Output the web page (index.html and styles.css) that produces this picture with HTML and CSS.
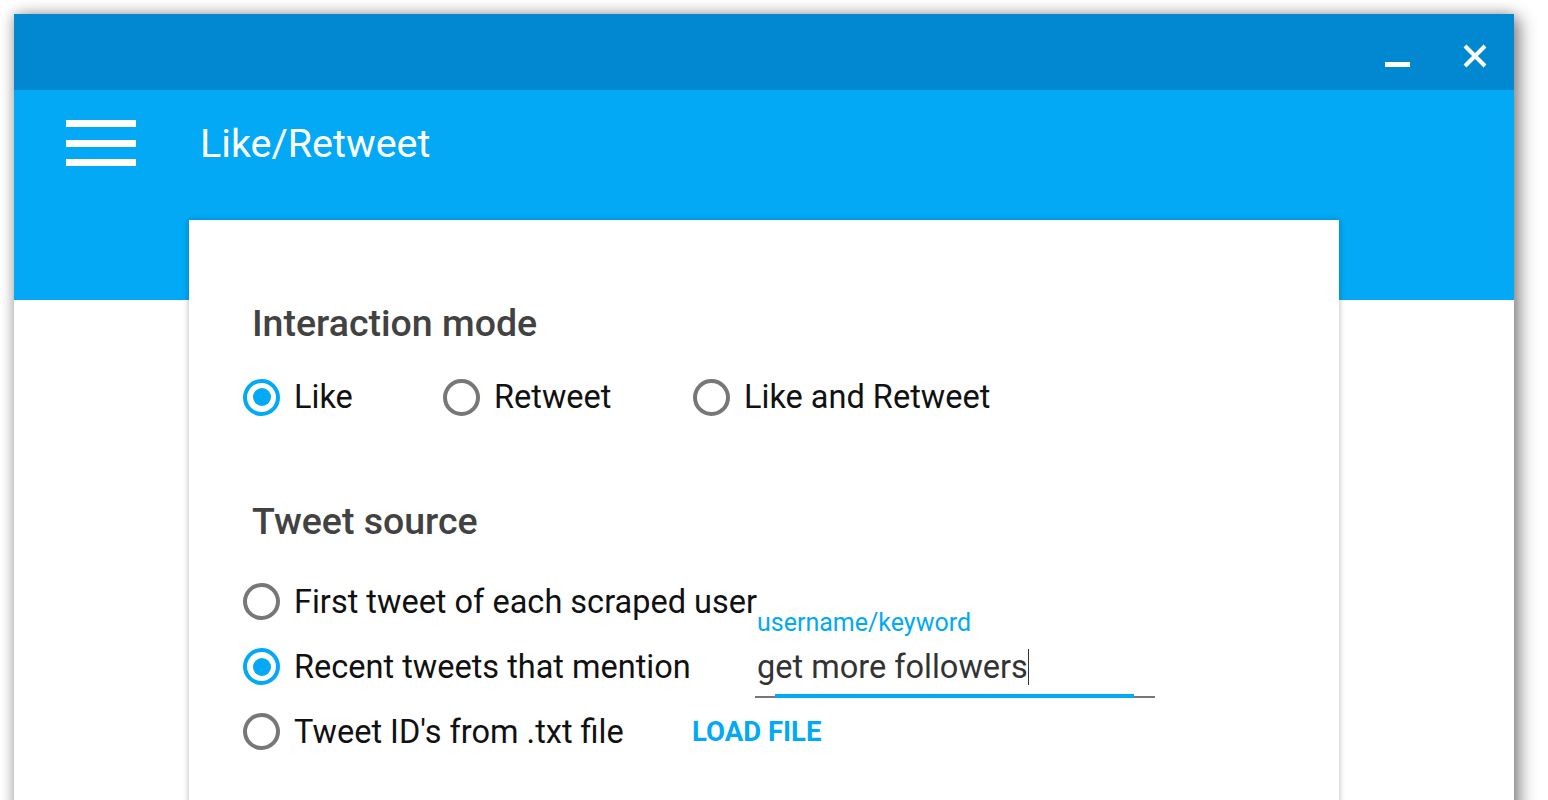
FILE: index.html
```html
<!DOCTYPE html>
<html>
<head>
<meta charset="utf-8">
<link rel="stylesheet" href="styles.css">
</head>
<body>
<div class="window">
  <div class="titlebar">
    <svg class="win-btn min" width="26" height="6" viewBox="0 0 26 6"><rect x="0" y="0" width="25" height="5" fill="#fff"/></svg>
    <svg class="win-btn close" width="24" height="24" viewBox="0 0 24 24"><path d="M2 2 L22 22 M22 2 L2 22" stroke="#fff" stroke-width="4" fill="none"/></svg>
  </div>
  <div class="appbar">
    <div class="hamburger"><span></span><span></span><span></span></div>
    <div class="app-title">Like/Retweet</div>
  </div>
  <div class="body">
    <div class="card">
      <h2 class="heading">Interaction mode</h2>
      <div class="radio-line">
        <label class="radio w200"><span class="circle checked"></span><span class="lbl">Like</span></label>
        <label class="radio w250"><span class="circle"></span><span class="lbl">Retweet</span></label>
        <label class="radio"><span class="circle"></span><span class="lbl">Like and Retweet</span></label>
      </div>
      <h2 class="heading second">Tweet source</h2>
      <div class="source-grid">
        <label class="radio nowrap"><span class="circle"></span><span class="lbl">First tweet of each scraped user</span></label>
        <div></div>
        <label class="radio"><span class="circle checked"></span><span class="lbl">Recent tweets that mention</span></label>
        <div class="field">
          <span class="field-label">username/keyword</span>
          <div class="field-value">get more followers<span class="caret"></span></div>
          <div class="field-line"><div class="field-line-active"></div></div>
        </div>
        <label class="radio"><span class="circle"></span><span class="lbl">Tweet ID's from .txt file</span></label>
        <div class="load-btn">LOAD FILE</div>
      </div>
    </div>
  </div>
</div>
</body>
</html>
```
FILE: styles.css
```css
html, body {
  margin: 0;
  padding: 0;
  background: #ffffff;
  height: 800px;
  overflow: hidden;
  font-family: Roboto, "Noto Sans", Arial, sans-serif;
}
.window {
  position: relative;
  top: 14px;
  margin-left: 14px;
  width: 1500px;
  height: 900px;
  background: #fff;
  box-shadow: 6px 4px 16px rgba(0,0,0,0.45), -2px -1px 12px rgba(0,0,0,0.2);
  display: flex;
  flex-direction: column;
}
.titlebar {
  flex: none;
  height: 76px;
  background: #0288d1;
  display: flex;
  align-items: flex-start;
  justify-content: flex-end;
  padding-right: 27px;
  box-sizing: border-box;
}
.win-btn { display: block; }
.win-btn.min { margin-top: 48px; margin-right: 52px; }
.win-btn.close { margin-top: 30px; }
.appbar {
  flex: none;
  height: 210px;
  background: #03a9f4;
  display: flex;
  align-items: flex-start;
  padding: 30px 0 0 52px;
  box-sizing: border-box;
}
.hamburger {
  width: 70px;
  display: flex;
  flex-direction: column;
  gap: 12.5px;
}
.hamburger span {
  display: block;
  height: 7px;
  background: #fff;
}
.app-title {
  color: #fff;
  font-size: 39.5px;
  margin-left: 64px;
  margin-top: 0px;
  line-height: 48px;
}
.body {
  flex: 1;
  padding: 0 175px;
}
.card {
  margin-top: -80px;
  background: #fff;
  height: 700px;
  box-shadow: 0 1px 6px rgba(0,0,0,0.3);
  padding: 78px 0 0 54px;
  box-sizing: border-box;
}
.heading {
  margin: 0 0 0 9px;
  font-size: 37.5px;
  font-weight: 500;
  color: #424242;
  line-height: 50px;
}
.heading.second { margin-top: 74px; }
.radio-line {
  display: flex;
  margin-top: 24px;
}
.radio {
  display: flex;
  align-items: center;
  height: 50px;
  color: #111;
  font-size: 32.5px;
}
.w200 { width: 200px; }
.w250 { width: 250px; }
.nowrap { white-space: nowrap; width: 449px; }
.circle {
  width: 29px;
  height: 29px;
  border: 4.5px solid #777;
  border-radius: 50%;
  box-sizing: content-box;
  position: relative;
  flex: none;
}
.circle.checked { border-color: #03a9f4; }
.circle.checked::after {
  content: "";
  position: absolute;
  left: 5.5px;
  top: 5.5px;
  width: 18px;
  height: 18px;
  border-radius: 50%;
  background: #03a9f4;
}
.lbl { margin-left: 14px; }
.source-grid {
  display: grid;
  grid-template-columns: 449px auto;
  grid-auto-rows: 65px;
  margin-top: 23px;
  align-items: center;
}
.field {
  position: relative;
  width: 400px;
  margin-left: 63px;
  height: 50px;
}
.field-label {
  position: absolute;
  left: 2px;
  top: -34px;
  font-size: 25px;
  line-height: 30px;
  color: #03a9f4;
}
.field-value {
  font-size: 32.5px;
  color: #333;
  line-height: 50px;
  padding-left: 2px;
}
.caret {
  display: inline-block;
  width: 1px;
  height: 36px;
  background: #333;
  vertical-align: -7px;
}
.field-line {
  position: absolute;
  left: 0;
  right: 0;
  top: 54px;
  height: 2px;
  background: #777;
}
.field-line-active {
  position: absolute;
  left: 20px;
  right: 21px;
  top: -2px;
  height: 4px;
  background: #03a9f4;
}
.load-btn {
  font-size: 27.5px;
  font-weight: 700;
  color: #03a9f4;
}
```
